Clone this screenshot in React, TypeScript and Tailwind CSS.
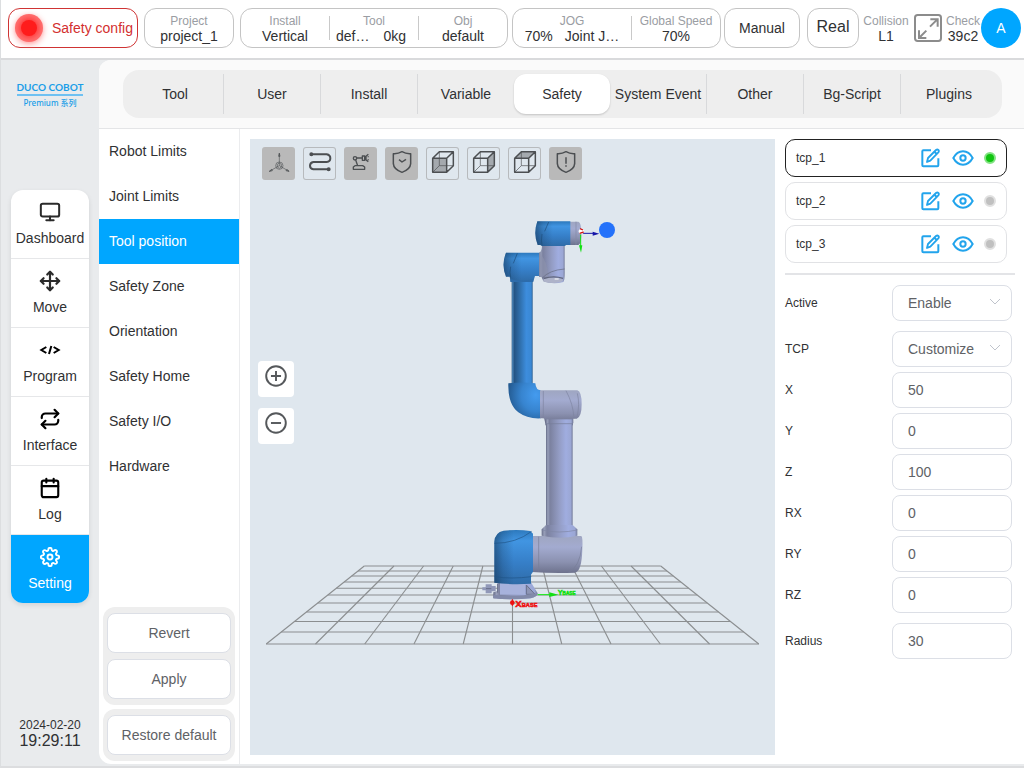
import React, { useState } from "react";
import { Calendar, Monitor, Move, Repeat } from "lucide-react";
import { FiSettings } from "react-icons/fi";

function Stat({ label, value, className = "" }: { label: string; value: React.ReactNode; className?: string }) {
  return (
    <div className={"flex flex-col items-center justify-center pt-[1px] whitespace-nowrap " + className}>
      <span className="text-xs leading-[14px] text-[#9a9da3]">{label}</span>
      <span className="text-sm leading-4">{value}</span>
    </div>
  );
}

const headerBox = "flex h-10 shrink-0 items-center justify-center rounded-xl border border-[#c4c4c4] bg-white";

function Header() {
  return (
    <header className="flex h-[60px] items-start border-b-2 border-[#d9dadc] bg-white pt-2 pr-[3px] pl-[7px]">
      <button className="flex h-10 w-[130px] shrink-0 items-center rounded-xl border border-[#cf3434] pl-[6px] text-sm whitespace-nowrap text-[#d32f2f]">
        <span className="mr-[9px] flex size-7 shrink-0 items-center justify-center rounded-full bg-[#ff6f6f] shadow-[0_2px_6px_#ff9c9c]">
          <span className="size-4 rounded-full bg-[#ff1c1c] shadow-[0_0_5px_2px_#ff3a3a]" />
        </span>
        Safety config
      </button>
      <div className={headerBox + " ml-[6px] w-[90px]"}>
        <Stat label="Project" value="project_1" />
      </div>
      <div className={headerBox + " ml-[6px] min-w-[268px] flex-1"}>
        <Stat label="Install" value="Vertical" className="flex-1" />
        <span className="h-6 w-px bg-[#c9c9c9]" />
        <Stat
          label="Tool"
          value={
            <span className="flex justify-center gap-[14px] pr-[6px]">
              <span>def…</span>
              <span>0kg</span>
            </span>
          }
          className="flex-1"
        />
        <span className="h-6 w-px bg-[#c9c9c9]" />
        <Stat label="Obj" value="default" className="flex-1" />
      </div>
      <div className={headerBox + " ml-1 w-[209px]"}>
        <Stat
          label="JOG"
          value={
            <span className="flex justify-center gap-3">
              <span>70%</span>
              <span>Joint J…</span>
            </span>
          }
          className="w-[118px]"
        />
        <span className="h-6 w-px bg-[#c9c9c9]" />
        <Stat label="Global Speed" value="70%" className="flex-1" />
      </div>
      <button className={headerBox + " ml-[3px] w-[76px] text-sm"}>Manual</button>
      <button className={headerBox + " ml-[7px] w-[52px] pb-[2px] text-base"}>Real</button>
      <Stat label="Collision" value="L1" className="ml-[4px] h-10 w-[46px]" />
      <button aria-label="Full screen" className="mt-[6px] ml-[5px] shrink-0">
        <svg viewBox="0 0 84 84" className="size-7" fill="none" stroke="#8c8c8c" strokeWidth="6">
          <rect x="3" y="3" width="78" height="78" rx="8" />
          <path d="M48 38 70 16M49 16h22v22M37 50 15 72M15 49v23h22" />
        </svg>
      </button>
      <Stat label="Check" value="39c2" className="ml-[3px] h-10 w-[36px]" />
      <button className="size-10 shrink-0 rounded-full bg-[#00a6ff] text-sm text-white">A</button>
    </header>
  );
}

function CodeIcon() {
  return (
    <svg viewBox="0 0 66 66" className="size-[22px]" fill="none" stroke="#000" strokeWidth="6">
      <path d="M22 24 7 33l15 9M44 24l15 9-15 9M37 21l-7 24" />
    </svg>
  );
}

const navItems = [
  { label: "Dashboard", icon: <Monitor size={22} strokeWidth={2.2} color="#2b2b2b" /> },
  { label: "Move", icon: <Move size={22} strokeWidth={2.4} color="#2b2b2b" /> },
  { label: "Program", icon: <CodeIcon /> },
  { label: "Interface", icon: <Repeat size={22} strokeWidth={2.4} color="#000" /> },
  { label: "Log", icon: <Calendar size={22} strokeWidth={2.3} color="#000" /> },
  { label: "Setting", icon: <FiSettings size={20} strokeWidth={2.3} className="my-[1px]" /> },
];

function Sidebar() {
  return (
    <aside className="flex w-[98px] shrink-0 flex-col items-center pb-[15px]">
      <div className="flex h-[130px] flex-col items-center pt-5 text-[#1a9ee8]">
        <div className="font-['Lato',sans-serif] text-[10px] leading-[14px] font-bold whitespace-nowrap">DUCO COBOT</div>
        <div className="h-[2px] w-[66px] bg-[#6fc1f2]" />
        <div className="pt-[1px] font-['Noto_Sans','Noto_Sans_CJK_SC',sans-serif] text-[8px] leading-3 font-medium">Premium 系列</div>
      </div>
      <nav className="flex w-[78px] flex-col overflow-hidden rounded-xl bg-white shadow-[0_2px_5px_rgba(0,0,0,0.1)]">
        {navItems.map((item) => (
          <a
            key={item.label}
            href="#"
            className={
              "flex flex-col items-center text-sm " +
              (item.label === "Setting" ? "h-[68px] bg-[#00a6ff] pt-[11px] text-white" : "h-[69px] border-b border-[#e6e7e9] pt-[11px]")
            }
          >
            {item.icon}
            <span className="mt-[5px]">{item.label}</span>
          </a>
        ))}
      </nav>
      <div className="mt-auto text-center">
        <div className="text-xs leading-[15px]">2024-02-20</div>
        <div className="text-base leading-4">19:29:11</div>
      </div>
    </aside>
  );
}

const tabs = ["Tool", "User", "Install", "Variable", "Safety", "System Event", "Other", "Bg-Script", "Plugins"];

function Tabs() {
  return (
    <div className="border-b border-[#e4e5e7] bg-[#fafafa] py-[10px] pr-[22px] pl-6">
      <div role="tablist" className="flex h-12 rounded-2xl bg-[#eeeeee] pr-[5px] pl-[4px] py-1">
        {tabs.map((tab, i) => (
          <button
            key={tab}
            role="tab"
            aria-selected={tab === "Safety"}
            className={
              "min-w-0 flex-1 text-sm whitespace-nowrap " +
              (tab === "Safety"
                ? "rounded-xl bg-white shadow-[0_1px_2px_rgba(0,0,0,0.18)]"
                : i === 3 || i === 8
                  ? ""
                  : "border-r border-[#d8d9db]")
            }
          >
            {tab}
          </button>
        ))}
      </div>
    </div>
  );
}

const menu = ["Robot Limits", "Joint Limits", "Tool position", "Safety Zone", "Orientation", "Safety Home", "Safety I/O", "Hardware"];

function ActionButton({ children }: { children: React.ReactNode }) {
  return (
    <button className="h-10 rounded-lg border border-[#dcdfe6] bg-white text-sm text-[#606266]">{children}</button>
  );
}

function Menu() {
  return (
    <div className="flex w-[141px] shrink-0 flex-col border-r border-[#ebecee] pb-[3px]">
      <nav className="flex flex-col">
        {menu.map((item) => (
          <a
            key={item}
            href="#"
            className={
              "flex h-[45px] items-center px-[10px] pb-[2px] text-sm " + (item === "Tool position" ? "bg-[#00a6ff] text-white" : "")
            }
          >
            {item}
          </a>
        ))}
      </nav>
      <div className="mt-auto flex flex-col gap-1 px-1">
        <div className="flex flex-col gap-[6px] rounded-xl bg-[#eeeeee] px-1 py-[6px]">
          <ActionButton>Revert</ActionButton>
          <ActionButton>Apply</ActionButton>
        </div>
        <div className="flex flex-col rounded-xl bg-[#eeeeee] px-1 py-[6px]">
          <ActionButton>Restore default</ActionButton>
        </div>
      </div>
    </div>
  );
}

const gridRows = [566, 571, 576, 582, 588.3, 595, 603, 612, 621.5, 632, 644];
const gridCols = Array.from({ length: 11 }, (_, i) => i);

function Floor() {
  return (
    <g stroke="#8b8e90" strokeWidth="1.1">
      {gridRows.map((y) => {
        const inset = ((644 - y) / 78) * 98.1;
        return <line key={y} x1={266.2 + inset} x2={758.8 - inset} y1={y} y2={y} />;
      })}
      {gridCols.map((i) => (
        <line key={i} x1={364.3 + i * 29.64} y1={566} x2={266.2 + i * 49.26} y2={644} />
      ))}
    </g>
  );
}

function Robot() {
  return (
    <g transform="translate(470 210) scale(0.33333)">
      <defs>
        <linearGradient id="blueAcross">
          <stop offset="0" stopColor="#24547f" />
          <stop offset="0.05" stopColor="#4d86b8" />
          <stop offset="0.12" stopColor="#235383" />
          <stop offset="0.4" stopColor="#2f6fac" />
          <stop offset="0.7" stopColor="#3d8ddd" />
          <stop offset="0.93" stopColor="#3a88d4" />
          <stop offset="1" stopColor="#285a8b" />
        </linearGradient>
        <linearGradient id="blueDown" x2="0" y2="1">
          <stop offset="0" stopColor="#2d79bd" />
          <stop offset="0.2" stopColor="#4195e2" />
          <stop offset="0.6" stopColor="#367fc8" />
          <stop offset="1" stopColor="#2f6ca8" />
        </linearGradient>
        <linearGradient id="shade">
          <stop offset="0" stopColor="#102a44" stopOpacity="0.5" />
          <stop offset="0.22" stopColor="#102a44" stopOpacity="0.2" />
          <stop offset="0.5" stopColor="#102a44" stopOpacity="0" />
        </linearGradient>
        <linearGradient id="grayAcross">
          <stop offset="0" stopColor="#656b86" />
          <stop offset="0.07" stopColor="#989fb9" />
          <stop offset="0.15" stopColor="#7b819f" />
          <stop offset="0.5" stopColor="#949dc5" />
          <stop offset="0.75" stopColor="#a0ade0" />
          <stop offset="0.93" stopColor="#9ba7d4" />
          <stop offset="1" stopColor="#737a98" />
        </linearGradient>
        <linearGradient id="grayDown" x2="0" y2="1">
          <stop offset="0" stopColor="#9fa6c1" />
          <stop offset="0.3" stopColor="#a3abd0" />
          <stop offset="0.7" stopColor="#8b91b0" />
          <stop offset="1" stopColor="#6d728d" />
        </linearGradient>
        <radialGradient id="elbow" cx="0.85" cy="0.35" r="0.9">
          <stop offset="0" stopColor="#449bef" />
          <stop offset="0.5" stopColor="#3784cf" />
          <stop offset="1" stopColor="#22578c" />
        </radialGradient>
      </defs>

      {/* wrist */}
      <path d="M300 35h25q9 2 9 35t-9 35h-25z" fill="url(#grayDown)" />
      <path d="M318 35v70" stroke="#858ba6" strokeWidth="2" />
      <path d="M216 104h68v72q1 36-4 40-30 9-60-2l-5-12-8-2v-72q9-3 9-24z" fill="url(#grayAcross)" />
      <path d="M207 128q25 22 28 72h-28z" fill="#8b91ad" opacity="0.7" />
      <path d="M216 205q22-25 68-28" fill="none" stroke="#64697f" strokeWidth="2" />
      <ellipse cx="249" cy="211" rx="30" ry="8" fill="#aeb3c9" />
      <path d="M222 205q30-9 57 0" fill="none" stroke="#60657a" strokeWidth="4" />
      <path d="M254 207h12" stroke="#fff" strokeWidth="3" />
      <path d="M202 34h99v71h-12l-5 3h-68l-5-3h-8q-14-35-1-71z" fill="url(#blueDown)" />
      <path d="M202 34h99v71h-12l-5 3h-68l-5-3h-8q-14-35-1-71z" fill="url(#shade)" />
      <path d="M216 72q-3 20 0 34M236 36l-12 28" fill="none" stroke="#1d4d7a" strokeWidth="2" />

      {/* upper joint and forearm */}
      <path d="M108 128h99v70h-12l-5 16h-68l-3-14h-11q-15-36 0-72z" fill="url(#blueDown)" />
      <path d="M108 128h99v70h-12l-5 16h-68l-3-14h-11q-15-36 0-72z" fill="url(#shade)" />
      <path d="M122 170q-4 18 0 32M142 130l-12 30" fill="none" stroke="#1d4d7a" strokeWidth="2" />
      <rect x="125" y="214" width="63" height="307" fill="url(#blueAcross)" />
      <path d="M121 207q35 10 69 0v9h-69z" fill="#2d6cab" />

      {/* elbow and upper arm */}
      <path d="M115 520q40-5 81 0 2 21 16 21v84q-40 2-67-18-32-25-30-87z" fill="url(#elbow)" />
      <path d="M210 541h112q13 3 13 42t-15 43h-10v14h-84l-4-15h-12z" fill="url(#grayDown)" />
      <path d="M220 543v82M288 542q22 40 24 84M322 550q8 32-1 72" fill="none" stroke="#7d83a0" strokeWidth="2" />
      <path d="M226 628h83v18h-83z" fill="url(#grayAcross)" />
      <rect x="228" y="641" width="80" height="312" fill="url(#grayAcross)" />
      <path d="M226 641h83" stroke="#777e9b" strokeWidth="2" />

      {/* shoulder */}
      <path d="M186 978h148q5 4 3 40-2 68-22 70-63 3-129-2z" fill="url(#grayDown)" />
      <path d="M335 1010q-5 60-40 78M206 980v106" fill="none" stroke="#777d99" strokeWidth="2" />
      <path d="M228 945h80l14 13v19q-50 12-107 0v-19z" fill="url(#grayAcross)" />
      <path d="M215 960q52 12 107 0" fill="none" stroke="#7f86a5" strokeWidth="2" />

      {/* base */}
      <path d="M82 1115h100l21 35q0 10-20 15-55 6-113 0v-18l12-4z" fill="url(#grayAcross)" />
      <path d="M90 1118h76v36H90z" fill="#a7b2dc" />
      <path d="M169 1125v28h26zM83 1122v26" fill="#8d95b5" stroke="#676d88" strokeWidth="3" />
      <path d="M70 1154q60 9 132-4-1 11-20 15-55 6-112 0z" fill="#828aaa" />
      <path d="M37 1132h10v-9h18v5h12v16H65v6H47v-9H37z" fill="#9098b8" />
      <path d="M48 1136h16" stroke="#656c88" strokeWidth="3" />
      <path d="M73 1118V995q2-28 28-33 45-4 80 1l8 8v114l-6 9v27q-58 4-110-3z" fill="url(#blueDown)" />
      <path d="M73 1118V995q2-28 28-33 45-4 80 1l8 8v114l-6 9v27q-58 4-110-3z" fill="url(#shade)" />
      <path d="M73 1000q65 0 112-36M74 1100q50 8 110 0" fill="none" stroke="#1f5488" strokeWidth="2" />

      {/* axes at the tool and at the base */}
      <circle cx="411" cy="60" r="24" fill="#2472fa" />
      <path d="M338 70h34" stroke="#1616a8" strokeWidth="3" />
      <path d="M368 65l20 6-20 6z" fill="#1616a8" />
      <path d="M332 74v34" stroke="#10e010" strokeWidth="3" />
      <path d="M327 106h10l-4 22z" fill="#10e010" />
      <circle cx="334" cy="64" r="8" fill="#fff" />
      <path d="M330 56l9 4M329 70l12-4" stroke="#d01515" strokeWidth="4" />
      <path d="M203 1154h40" stroke="#12f012" strokeWidth="3" />
      <path d="M238 1147l27 7-27 7z" fill="#12e012" />
      <circle cx="127" cy="1178" r="7" fill="#ee1010" />
      <path d="M127 1168v20" stroke="#ee1010" strokeWidth="3" />
      <g fontFamily="Liberation Sans, sans-serif" fontWeight="bold" strokeWidth="1.5">
        <text x="136" y="1190" fontSize="29" fill="#ee1010" stroke="#ee1010">
          X<tspan fontSize="17">BASE</tspan>
        </text>
        <text x="263" y="1156" fontSize="22" fill="#12e012" stroke="#12e012">
          Y<tspan fontSize="14">BASE</tspan>
        </text>
      </g>
    </g>
  );
}

const shield = "M25 20q14 1 26-6 12 7 26 6v30q-1 17-26 26-25-9-26-26z";

function Cube({ face }: { face: string }) {
  return (
    <>
      <path d={face} fill="#a4a9ae" stroke="none" />
      <path d="M40 15v41h42M40 56 21 75" strokeWidth="2" />
      <path d="M20 34h42v42H20zM20 34l20-20h42v42L62 76M62 34l20-20" />
    </>
  );
}

const tools = [
  {
    label: "Coordinate axes",
    on: true,
    art: (
      <g strokeWidth="1.8">
        <circle cx="52" cy="56" r="11" />
        <path d="M52 56V18M52 56 22 73M52 56l29 17M46 52l6-4 6 4v8l-6 4-6-4z" />
        <path d="M50 28l2-9 2 9zM29 67l-7 6 9-2zM75 67l6 6-9-2z" strokeWidth="2.5" />
      </g>
    ),
  },
  {
    label: "Trajectory",
    on: false,
    art: (
      <g strokeWidth="6">
        <path d="M24 22h47q11 2 11 12t-11 11H31q-10 2-10 11t10 11h45" />
        <circle cx="25" cy="22" r="3" />
        <circle cx="77" cy="67" r="3" />
      </g>
    ),
  },
  {
    label: "Robot model",
    on: true,
    art: (
      <g strokeWidth="4">
        <circle cx="33" cy="34" r="5" />
        <path d="M38 33h17M35 39l6 17M28 67v-7l5-4h23l6 4v7zM55 27h7v13h-7zM62 33h4M73 22l-7 6v11l7 5M74 29h-3M74 38h-3" />
      </g>
    ),
  },
  { label: "Safety check", on: true, art: <path d={shield + "M42 38l9 7 12-8"} /> },
  { label: "Front plane", on: false, art: <Cube face="M20 34h42v42H20z" /> },
  { label: "Side plane", on: false, art: <Cube face="M62 34l20-20v42L62 76z" /> },
  { label: "Top plane", on: false, art: <Cube face="M20 34l20-20h42L62 34z" /> },
  { label: "Safety warning", on: true, art: <path d={shield + "M51 31v19M51 55v4"} /> },
];

function Viewport() {
  return (
    <div className="relative min-h-[560px] min-w-0 flex-1 bg-[#dfe7ee]">
      <svg viewBox="250 139 525 616" className="absolute inset-0 h-full w-full" aria-hidden="true">
        <Floor />
        <Robot />
      </svg>
      <div className="relative flex gap-2 pt-2 pl-3">
        {tools.map((t) => (
          <button
            key={t.label}
            aria-label={t.label}
            className={"size-[33px] rounded-[3px] " + (t.on ? "bg-[#b9b9b9]" : "shadow-[inset_0_0_0_1px_#b7babd]")}
          >
            <svg viewBox="0 0 99 99" className="size-[33px]" fill="none" stroke="#4c4f52" strokeWidth="4.5" strokeLinejoin="round">
              {t.art}
            </svg>
          </button>
        ))}
      </div>
      <div className="relative mt-[181px] ml-2 flex w-9 flex-col gap-[11px]">
        {["Zoom in", "Zoom out"].map((label) => (
          <button key={label} aria-label={label} className="flex h-9 justify-center rounded-[4px] bg-white pt-1">
            <svg viewBox="0 0 24 24" className="size-[22px]" fill="none" stroke="#55585b" strokeWidth="2.1">
              <circle cx="12" cy="12" r="10.7" />
              <path d={label === "Zoom in" ? "M6.5 12h11M12 6.5v11" : "M6.5 12h11"} />
            </svg>
          </button>
        ))}
      </div>
    </div>
  );
}

function TcpRow({ name, active }: { name: string; active: boolean }) {
  return (
    <li className={"flex h-[38px] items-center rounded-[10px] border px-[10px] " + (active ? "border-[#222222]" : "border-[#e1e2e5]")}>
      <span className="flex-1 text-xs">{name}</span>
      <button aria-label={"Edit " + name} className="pb-[1px]">
        <svg viewBox="0 0 60 60" className="size-5" fill="none" stroke="#22a4ec" strokeWidth="6" strokeLinejoin="round">
          <path d="M30 7H7q-3 0-3 3v42q0 3 3 3h42q3 0 3-3V31" />
          <path d="M18 42l3-12L45 6q4-3 7 0t0 7L28 38zM40 11l7 7" strokeWidth="5.5" />
        </svg>
      </button>
      <button aria-label={"Show " + name} className="ml-[11px] pb-[1px]">
        <svg viewBox="0 0 66 60" className="h-5 w-[22px]" fill="none" stroke="#22a4ec" strokeWidth="6">
          <path d="M4 30Q15 10 33 10t29 20Q51 50 33 50T4 30z" />
          <circle cx="33" cy="30" r="8" />
        </svg>
      </button>
      <span
        className={"ml-[10px] size-3 rounded-full border-2 " + (active ? "border-[#83e383] bg-[#10c410]" : "border-[#e0e0e0] bg-[#c0c0c0]")}
      />
    </li>
  );
}

const control = "h-9 w-[120px] rounded-lg border border-[#dcdfe6] bg-white px-[15px] text-sm text-[#606266]";

function SelectField({ label, value }: { label: string; value: string }) {
  return (
    <div className="flex items-center justify-between">
      <label htmlFor={label} className="text-xs">
        {label}
      </label>
      <div className="relative">
        <select id={label} className={control + " block appearance-none"}>
          <option>{value}</option>
        </select>
        <svg viewBox="0 0 12 12" className="pointer-events-none absolute top-[11px] right-[11px] size-3" fill="none" stroke="#c0c4cc">
          <path d="M1 3l5 5 5-5" />
        </svg>
      </div>
    </div>
  );
}

function NumberField({ label, initial }: { label: string; initial: string }) {
  const [value, setValue] = useState(initial);
  return (
    <div className="flex items-center justify-between">
      <label htmlFor={label} className="text-xs">
        {label}
      </label>
      <input id={label} value={value} onChange={(e) => setValue(e.target.value)} className={control} />
    </div>
  );
}

const coords = [
  ["X", "50"],
  ["Y", "0"],
  ["Z", "100"],
  ["RX", "0"],
  ["RY", "0"],
  ["RZ", "0"],
];

function Properties() {
  return (
    <div className="w-[239px] shrink-0 pr-3">
      <ul className="mr-[5px] flex flex-col gap-[5px]">
        <TcpRow name="tcp_1" active />
        <TcpRow name="tcp_2" active={false} />
        <TcpRow name="tcp_3" active={false} />
      </ul>
      <hr className="-mr-[3px] mt-[10px] mb-[10px] border-t-2 border-[#e3e4e7]" />
      <form className="flex flex-col gap-[10px]">
        <SelectField label="Active" value="Enable" />
        <div className="flex flex-col gap-[5px]">
          <SelectField label="TCP" value="Customize" />
          {coords.map(([label, value]) => (
            <NumberField key={label} label={label} initial={value} />
          ))}
        </div>
        <NumberField label="Radius" initial="30" />
      </form>
    </div>
  );
}

export default function App() {
  return (
    <div className="flex min-h-screen flex-col border-l border-[#dcdee0] bg-[#e9ebed] font-['Liberation_Sans',Arial,sans-serif] text-[#303133]">
      <Header />
      <div className="flex flex-1">
        <Sidebar />
        <main className="flex min-w-0 flex-1 flex-col overflow-hidden rounded-l-xl bg-white">
          <Tabs />
          <div className="flex flex-1">
            <Menu />
            <div className="flex min-w-0 flex-1 gap-[10px] pt-[10px] pb-[9px] pl-[10px]">
              <Viewport />
              <Properties />
            </div>
          </div>
        </main>
      </div>
      <div className="h-1 border-b-2 border-[#dcdddf]" />
    </div>
  );
}
